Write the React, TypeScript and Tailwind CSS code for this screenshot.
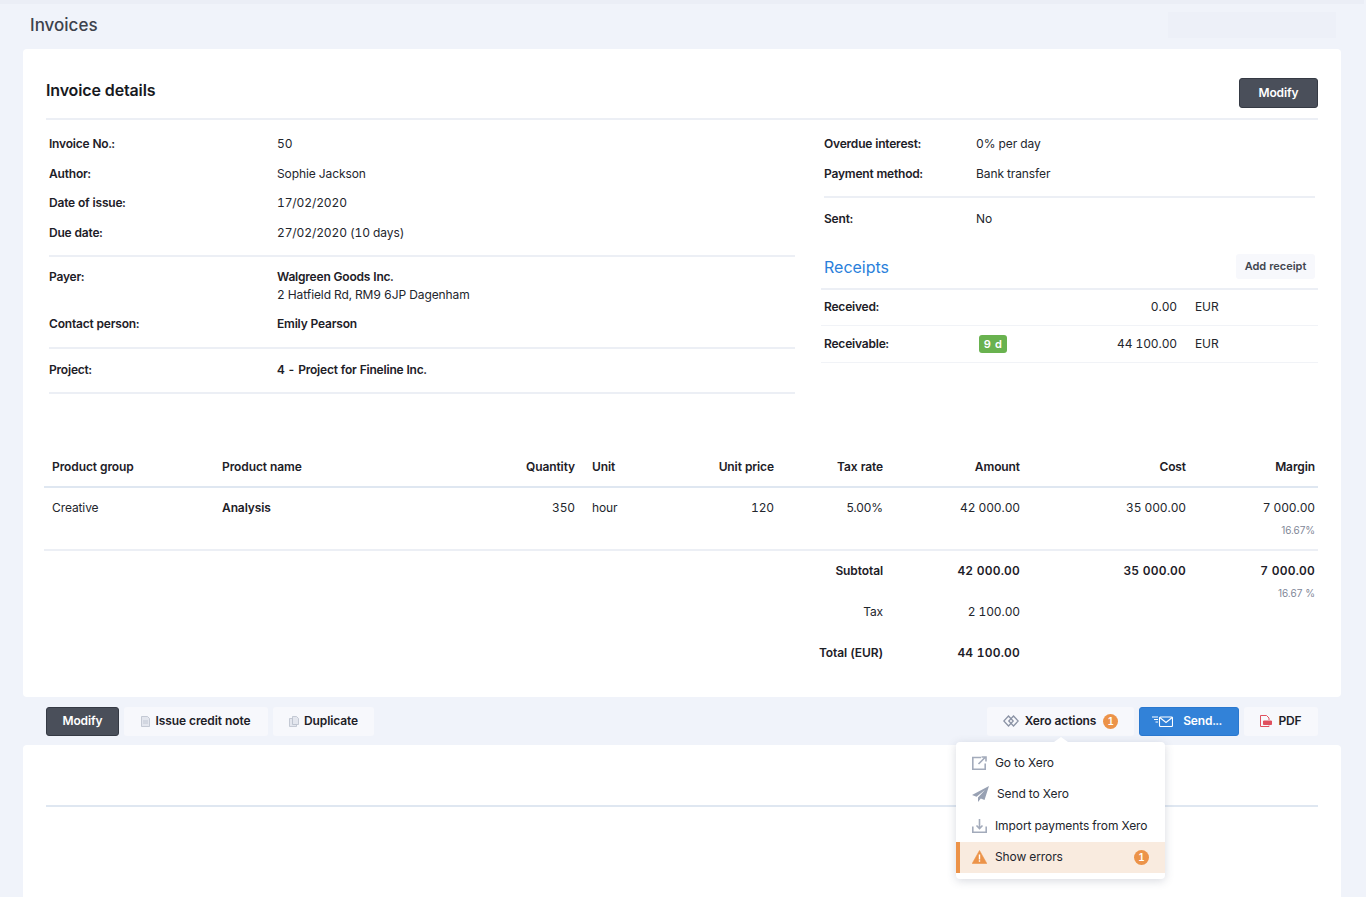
const font = "[font-family:Inter,'Liberation_Sans',sans-serif]";
const strong = "font-semibold tracking-[-0.2px] text-[#1d2027]";
const strongTable = "font-semibold tracking-[-0.1px] text-[#1d2027]";

function CountBadge() {
  return (
    <span className="flex h-[15px] w-[15px] items-center justify-center rounded-full bg-[#ec9349] text-[10px] font-semibold leading-none tracking-normal text-white">
      1
    </span>
  );
}

function Row({ label, children, className = "" }: { label: string; children: React.ReactNode; className?: string }) {
  return (
    <div className={`flex h-[29.5px] items-center ${className}`}>
      <div className={`w-[228px] shrink-0 ${strong}`}>{label}</div>
      <div>{children}</div>
    </div>
  );
}

function XeroMenu() {
  return (
    <div className="absolute left-[-31px] top-[35px] z-10 w-[209px] rounded-[4px] bg-white pb-[6px] pt-[5px] font-normal tracking-[-0.1px] text-[#23262d] shadow-[0_2px_10px_rgba(60,70,100,0.2)]">
      <div className="absolute left-[98px] top-[-5px] h-0 w-0 border-x-[7px] border-b-[5px] border-x-transparent border-b-white" />
      <div className="flex h-[31.5px] items-center pl-4">
        <svg width="15" height="14" viewBox="0 0 15 14" fill="none" stroke="#a3abbb" strokeWidth="1.6">
          <path d="M9 1.5H.8v11.7h12.4V7.5" />
          <path d="M6.5 8 13 1.5M9.5 1h4.5v4.5" />
        </svg>
        <span className="ml-2">Go to Xero</span>
      </div>
      <div className="flex h-[31.5px] items-center pl-4">
        <svg width="17" height="16" viewBox="0 0 17 16" fill="#98a1b3">
          <path d="M17 0 0 9l4.5 1.8L13 4 6 11.5V16l2.8-3.4 3.7 1.4z" />
        </svg>
        <span className="ml-2">Send to Xero</span>
      </div>
      <div className="flex h-[31.5px] items-center pl-4">
        <svg width="15" height="14" viewBox="0 0 15 14" fill="none" stroke="#a3abbb" strokeWidth="1.6">
          <path d="M.8 7.5v5.7h13.4V7.5" />
          <path d="M7.5 0v9M4.5 6.5l3 3 3-3" />
        </svg>
        <span className="ml-2">Import payments from Xero</span>
      </div>
      <div className="flex h-[31.5px] items-center border-l-4 border-[#ec9349] bg-[#f9ebdf] pl-3 pr-[16px]">
        <svg width="15" height="14" viewBox="0 0 15 14">
          <path d="M7.5 0.5 14.8 13.5H0.2z" fill="#ec9349" stroke="#ec9349" strokeLinejoin="round" strokeWidth="0.6" />
          <path d="M6.8 4.6h1.4v4.8H6.8zM6.8 10.3h1.4v1.5H6.8z" fill="#fff" />
        </svg>
        <span className="ml-2 flex-1">Show errors</span>
        <CountBadge />
      </div>
    </div>
  );
}

export default function App() {
  const tableCols = "grid grid-cols-[170px_206px_163px_77px_122px_109px_137px_166px_124px] items-start";
  return (
    <div className={`${font} flex h-[897px] flex-col overflow-hidden bg-[#f0f3fa] pl-[23px] pr-[25px] text-[12px] tracking-[-0.1px] text-[#23262d] [font-variant-numeric:tabular-nums]`}>
      <div className="-mx-[23px] flex h-[49px] shrink-0 items-center justify-between border-t-4 border-[#ebeef6] pb-[2px] pl-[30px] pr-[28px]">
        <span className="text-[17px] font-medium tracking-normal text-[#3d424c]">Invoices</span>
        <div className="mb-[2px] h-[26px] w-[168px] bg-[#edf0f8]" />
      </div>

      <div className="flex h-[648px] shrink-0 flex-col rounded-[4px] bg-white px-[23px]">
        <div className="flex h-[71px] shrink-0 items-end justify-between border-b-2 border-[#eceff5] pb-[10px]">
          <h1 className="mb-[6px] text-[16px] font-semibold leading-[24px] tracking-[-0.15px] text-[#17191e]">Invoice details</h1>
          <button className="flex h-[30px] w-[79px] items-center justify-center rounded-[3px] border border-[#353a44] bg-[#4a4f5a] font-semibold text-white">Modify</button>
        </div>

        <div className="flex shrink-0 justify-between pt-[9.5px]">
          <div className="ml-[3px] w-[746px]">
            <div className="border-b-2 border-[#eceff5] pb-[7.5px]">
              <Row label="Invoice No.:">50</Row>
              <Row label="Author:">Sophie Jackson</Row>
              <Row label="Date of issue:">17/02/2020</Row>
              <Row label="Due date:">27/02/2020 (10 days)</Row>
            </div>
            <div className="border-b-2 border-[#eceff5] pb-[14px] pt-[11px]">
              <div className="flex leading-[18px]">
                <div className={`w-[228px] shrink-0 ${strong}`}>Payer:</div>
                <div>
                  <div className={strong}>Walgreen Goods Inc.</div>
                  <div>2 Hatfield Rd, RM9 6JP Dagenham</div>
                </div>
              </div>
              <div className="mt-[11px] flex h-[18px] items-center">
                <div className={`w-[228px] shrink-0 ${strong}`}>Contact person:</div>
                <div className={strong}>Emily Pearson</div>
              </div>
            </div>
            <div className="flex h-[45px] items-center border-b-2 border-[#eceff5] pb-[2px]">
              <div className={`w-[228px] shrink-0 ${strong}`}>Project:</div>
              <div className={strong}>4 - Project for Fineline Inc.</div>
            </div>
          </div>

          <div className="w-[497px]">
            <div className="mx-[3px] border-b-2 border-[#eceff5] pb-[7.5px]">
              <div className="flex h-[29.5px] items-center"><div className={`w-[152px] ${strong}`}>Overdue interest:</div>0% per day</div>
              <div className="flex h-[29.5px] items-center"><div className={`w-[152px] ${strong}`}>Payment method:</div>Bank transfer</div>
            </div>
            <div className="ml-[3px] flex h-[41px] items-center"><div className={`w-[152px] ${strong}`}>Sent:</div>No</div>
            <div className="flex h-[51px] items-center justify-between border-b-2 border-[#eceff5] px-[3px] pt-[6px]">
              <div className="text-[16px] tracking-normal text-[#2a7fdb]">Receipts</div>
              <button className="flex h-[25px] w-[79px] items-center justify-center rounded-[3px] bg-[#f7f8fc] text-[11px] font-semibold tracking-normal text-[#41454f]">Add receipt</button>
            </div>
            <div className="flex h-[36px] items-center border-b border-[#f1f3f7] pb-[1px] pl-[3px]">
              <div className={`w-[155px] ${strong}`}>Received:</div>
              <div className="w-[198px] text-right">0.00</div>
              <div className="ml-[18px]">EUR</div>
            </div>
            <div className="flex h-[37px] items-center border-b border-[#f1f3f7] pl-[3px]">
              <div className={`w-[155px] ${strong}`}>Receivable:</div>
              <div className="flex w-[198px] items-center justify-between">
                <span className="flex h-[18px] w-[28px] items-center justify-center rounded-[3px] bg-[#69b24f] text-[11px] font-semibold tracking-[0.6px] text-white">9 d</span>
                <span>44 100.00</span>
              </div>
              <div className="ml-[18px]">EUR</div>
            </div>
          </div>
        </div>

        <div className="-ml-[2px] mt-[52px] shrink-0">
          <div className={`${tableCols} h-[42px] border-b-2 border-[#dfe7f1] pt-[12px] leading-[18px] ${strongTable}`}>
            <div className="pl-2">Product group</div>
            <div className="pl-2">Product name</div>
            <div className="pr-2 text-right">Quantity</div>
            <div className="pl-[9px]">Unit</div>
            <div className="pr-2 text-right">Unit price</div>
            <div className="pr-2 text-right">Tax rate</div>
            <div className="pr-2 text-right">Amount</div>
            <div className="pr-2 text-right">Cost</div>
            <div className="pr-[3px] text-right">Margin</div>
          </div>
          <div className={`${tableCols} h-[63px] border-b-2 border-[#eceff5] pt-[11px] leading-[18px]`}>
            <div className="pl-2">Creative</div>
            <div className={`pl-2 ${strongTable}`}>Analysis</div>
            <div className="pr-2 text-right">350</div>
            <div className="pl-[9px]">hour</div>
            <div className="pr-2 text-right">120</div>
            <div className="pr-2 text-right [font-variant-numeric:normal]">5.00%</div>
            <div className="pr-2 text-right">42 000.00</div>
            <div className="pr-2 text-right">35 000.00</div>
            <div className="pr-[3px] text-right">
              7 000.00
              <div className="mt-[7px] text-[10px] leading-[12px] text-[#7f8798] [font-variant-numeric:normal]">16.67%</div>
            </div>
          </div>
          <div className={`${tableCols} pt-[11px] leading-[18px] ${strongTable}`}>
            <div className="col-span-6 pr-2 text-right">Subtotal</div>
            <div className="pr-2 text-right tracking-[0.2px]">42 000.00</div>
            <div className="pr-2 text-right tracking-[0.2px]">35 000.00</div>
            <div className="pr-[3px] text-right tracking-[0.2px]">
              7 000.00
              <div className="mt-[7px] text-[10px] font-normal leading-[12px] tracking-normal text-[#7f8798] [font-variant-numeric:normal]">16.67 %</div>
            </div>
          </div>
          <div className={`${tableCols} mt-[4px] leading-[18px]`}>
            <div className="col-span-6 pr-2 text-right">Tax</div>
            <div className="pr-2 text-right">2 100.00</div>
          </div>
          <div className={`${tableCols} mt-[23px] leading-[18px] ${strongTable}`}>
            <div className="col-span-6 pr-2 text-right">Total (EUR)</div>
            <div className="pr-2 text-right tracking-[0.2px]">44 100.00</div>
          </div>
        </div>
      </div>

      <div className={`flex h-[48px] shrink-0 items-center justify-between px-[23px] pt-[1px] ${strongTable}`}>
        <div className="flex gap-[5px]">
          <button className="flex h-[29px] w-[73px] items-center justify-center rounded-[3px] border border-[#353a44] bg-[#4a4f5a] pb-[1px] text-white">Modify</button>
          <button className="flex h-[29px] w-[144px] items-center justify-center gap-[5px] rounded-[3px] bg-[#f7f8fc] pb-[1px]">
            <svg width="9" height="11" viewBox="0 0 9 11" fill="#e3e6ee" stroke="#b9bfcc" strokeWidth="0.8">
              <path d="M.5.5h6l2 2v8h-8z" />
              <path d="M2 5h5M2 7h5" fill="none" />
            </svg>
            Issue credit note
          </button>
          <button className="flex h-[29px] w-[101px] items-center justify-center gap-[5px] rounded-[3px] bg-[#f7f8fc] pb-[1px]">
            <svg width="10" height="11" viewBox="0 0 10 11" fill="#e3e6ee" stroke="#b9bfcc" strokeWidth="0.8">
              <path d="M3.5.5h4l2 2v6h-6z" />
              <path d="M.5 2.5h3v6h4v2h-7z" />
            </svg>
            Duplicate
          </button>
        </div>
        <div className="flex gap-[5px]">
          <div className="relative">
            <button className="flex h-[29px] w-[147px] items-center justify-center gap-[6px] rounded-[3px] bg-[#f7f8fc] pb-[1px]">
              <svg width="16" height="12" viewBox="0 0 16 12" fill="none" stroke="#8b93a5" strokeWidth="1.3">
                <path d="M5.5 1 .8 6l4.7 5 4.7-5z" />
                <path d="M10.5 1 15.2 6l-4.7 5L5.8 6z" />
              </svg>
              Xero actions
              <span className="ml-[1px]"><CountBadge /></span>
            </button>
            <XeroMenu />
          </div>
          <button className="flex h-[29px] w-[100px] items-center justify-center gap-[10px] rounded-[3px] border border-[#2a78cf] bg-[#3282d8] pb-[1px] pr-[4px] text-white">
            <svg width="21" height="11" viewBox="0 0 21 11" fill="none" stroke="#fff" strokeWidth="1.1">
              <rect x="7.5" y="1" width="13" height="9.5" rx="1" />
              <path d="M7.8 1.5l6.2 5 6.2-5" />
              <path d="M0 1h6M2 3.5h4M3.5 6H6" />
            </svg>
            Send...
          </button>
          <button className="flex h-[29px] w-[74px] items-center justify-center gap-[6px] rounded-[3px] bg-[#f7f8fc] pb-[1px]">
            <svg width="12" height="12" viewBox="0 0 12 12" fill="none" stroke="#e0505f" strokeWidth="1">
              <path d="M9 5V3L6.5.5h-6v11H9v-1" />
              <path d="M3.5 6h8v3.5h-8z" fill="#e0505f" />
            </svg>
            PDF
          </button>
        </div>
      </div>

      <div className="flex-1 rounded-t-[4px] bg-white px-[23px]">
        <div className="h-[62px] border-b-2 border-[#dfe7f1]" />
      </div>
    </div>
  );
}
